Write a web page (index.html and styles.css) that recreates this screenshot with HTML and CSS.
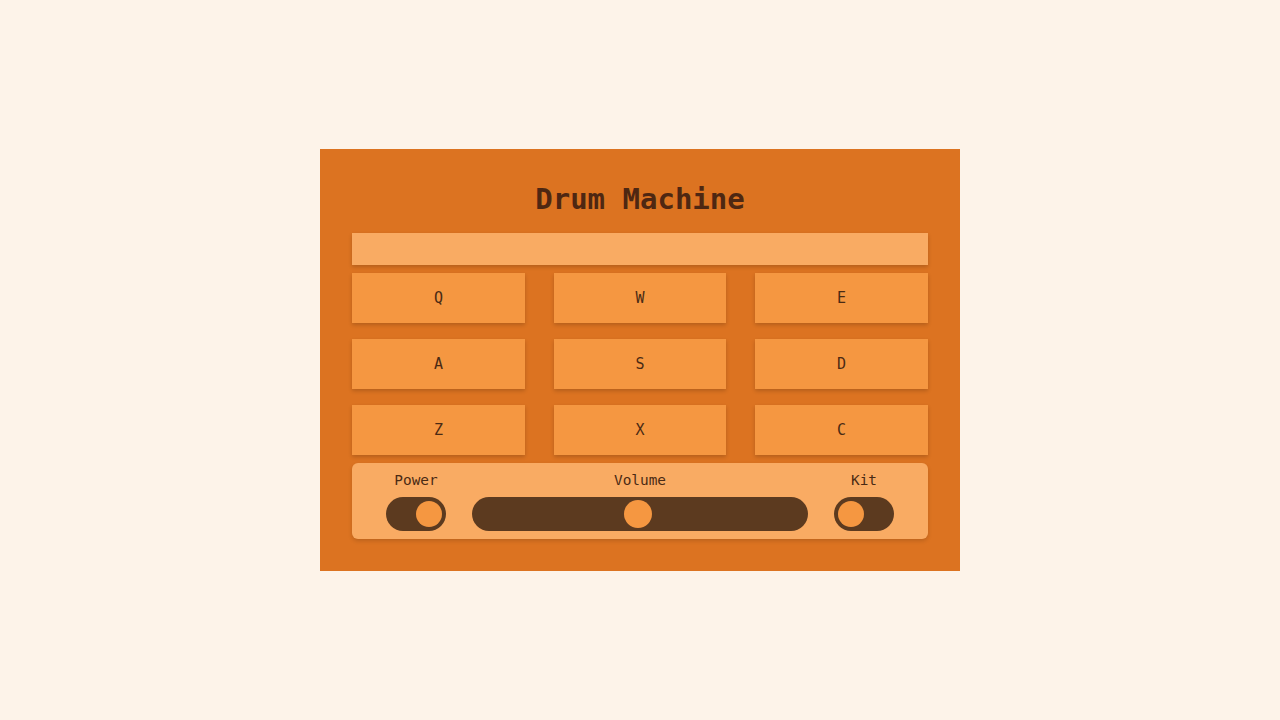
FILE: index.html
```html
<!DOCTYPE html>
<html>
<head>
<meta charset="utf-8">
<link rel="stylesheet" href="styles.css">
</head>
<body>
<div class="machine">
  <h1 class="title">Drum Machine</h1>
  <div class="display"></div>
  <div class="pads">
    <div class="pad">Q</div>
    <div class="pad">W</div>
    <div class="pad">E</div>
    <div class="pad">A</div>
    <div class="pad">S</div>
    <div class="pad">D</div>
    <div class="pad">Z</div>
    <div class="pad">X</div>
    <div class="pad">C</div>
  </div>
  <div class="controls">
    <div class="control">
      <div class="label">Power</div>
      <div class="toggle on"><span class="knob"></span></div>
    </div>
    <div class="control grow">
      <div class="label">Volume</div>
      <div class="slider"><span class="thumb"></span></div>
    </div>
    <div class="control">
      <div class="label">Kit</div>
      <div class="toggle"><span class="knob"></span></div>
    </div>
  </div>
</div>
</body>
</html>
```

FILE: styles.css
```css
* { box-sizing: border-box; }
html, body { margin: 0; padding: 0; }
body {
  background: #fdf3e9;
  font-family: "DejaVu Sans Mono", monospace;
  width: 1280px;
  height: 720px;
  display: flex;
  align-items: center;
  justify-content: center;
}
.machine {
  width: 640px;
  height: 422px;
  background: #dc7321;
  padding: 32px;
  display: flex;
  flex-direction: column;
}
.title {
  margin: 0;
  height: 52px;
  display: flex;
  align-items: center;
  justify-content: center;
  font-size: 29px;
  font-weight: bold;
  color: #4e2712;
  padding-bottom: 16px;
}
.display {
  height: 32px;
  background: #f9ab63;
  box-shadow: 0 2px 4px rgba(0,0,0,0.18);
}
.pads {
  margin-top: 8px;
  display: grid;
  grid-template-columns: 173px 172px 173px;
  justify-content: space-between;
  row-gap: 16px;
}
.pad {
  height: 50px;
  background: #f59741;
  box-shadow: 0 2px 4px rgba(0,0,0,0.18);
  display: flex;
  align-items: center;
  justify-content: center;
  font-size: 15px;
  color: #4a2a14;
}
.controls {
  margin-top: 8px;
  height: 76px;
  background: #f9ab63;
  border-radius: 6px;
  box-shadow: 0 2px 4px rgba(0,0,0,0.15);
  display: flex;
  padding: 7px 34px 8px;
  gap: 26px;
}
.control {
  display: flex;
  flex-direction: column;
  align-items: center;
  gap: 7px;
}
.control.grow { flex: 1; }
.label {
  height: 20px;
  line-height: 20px;
  font-size: 14.4px;
  color: #4a2a14;
}
.toggle {
  width: 60px;
  height: 34px;
  border-radius: 17px;
  background: #5c3a1f;
  padding: 4px;
  display: flex;
  justify-content: flex-start;
}
.toggle.on { justify-content: flex-end; }
.knob {
  width: 26px;
  height: 26px;
  border-radius: 50%;
  background: #f59741;
}
.slider {
  width: 100%;
  height: 34px;
  border-radius: 17px;
  background: #5c3a1f;
  display: flex;
  align-items: center;
  justify-content: center;
}
.thumb {
  width: 28px;
  height: 28px;
  border-radius: 50%;
  background: #f59741;
  margin-left: -4px;
}
```
